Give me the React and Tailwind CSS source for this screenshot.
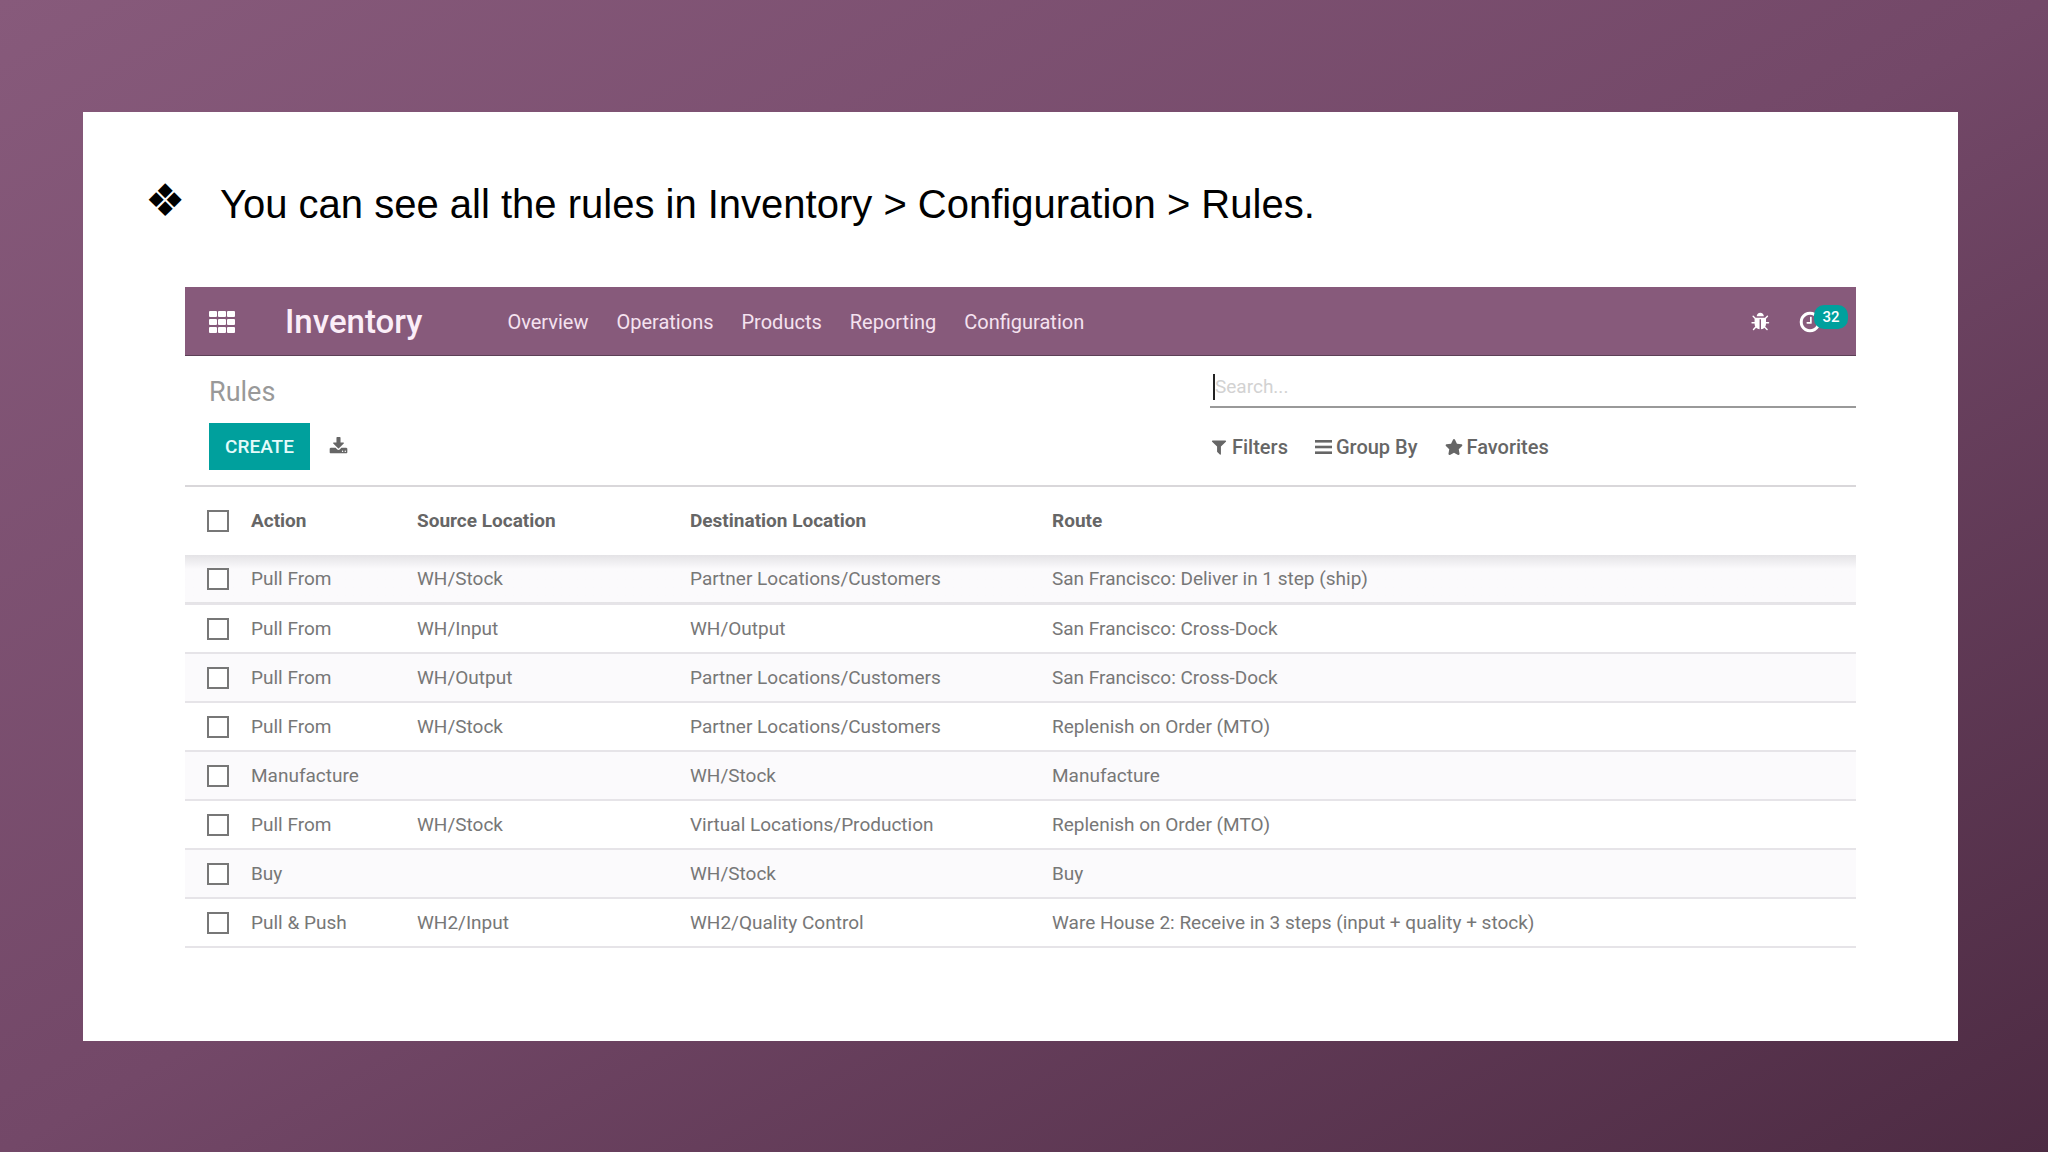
import React, { useState } from 'react';
import { FaStar } from 'react-icons/fa';

const menus = ['Overview', 'Operations', 'Products', 'Reporting', 'Configuration'];

const rules = [
  { id: 1, action: 'Pull From', source: 'WH/Stock', destination: 'Partner Locations/Customers', route: 'San Francisco: Deliver in 1 step (ship)' },
  { id: 2, action: 'Pull From', source: 'WH/Input', destination: 'WH/Output', route: 'San Francisco: Cross-Dock' },
  { id: 3, action: 'Pull From', source: 'WH/Output', destination: 'Partner Locations/Customers', route: 'San Francisco: Cross-Dock' },
  { id: 4, action: 'Pull From', source: 'WH/Stock', destination: 'Partner Locations/Customers', route: 'Replenish on Order (MTO)' },
  { id: 5, action: 'Manufacture', source: '', destination: 'WH/Stock', route: 'Manufacture' },
  { id: 6, action: 'Pull From', source: 'WH/Stock', destination: 'Virtual Locations/Production', route: 'Replenish on Order (MTO)' },
  { id: 7, action: 'Buy', source: '', destination: 'WH/Stock', route: 'Buy' },
  { id: 8, action: 'Pull & Push', source: 'WH2/Input', destination: 'WH2/Quality Control', route: 'Ware House 2: Receive in 3 steps (input + quality + stock)' },
];

function Icon({ d, className }) {
  return (
    <svg viewBox="0 0 1792 1792" fill="currentColor" aria-hidden="true" className={className}>
      <path d={d} />
    </svg>
  );
}

const bugPath =
  'M1632 960q0 26-19 45t-45 19h-224q0 171-67 290l208 209q19 19 19 45t-19 45q-18 19-45 19t-45-19l-198-197q-5 5-15 13t-42 28.5-65 36.5-82 29-97 13v-896h-128v896q-51 0-101.5-13.5t-87-33-66-39-43.5-32.5l-15-14-183 207q-20 21-48 21-24 0-43-16-19-18-20.5-44.5t15.5-46.5l202-227q-58-114-58-274h-224q-26 0-45-19t-19-45 19-45 45-19h224v-294l-173-173q-19-19-19-45t19-45 45-19 45 19l173 173h844l173-173q19-19 45-19t45 19 19 45-19 45l-173 173v294h224q26 0 45 19t19 45zm-480-576h-640q0-133 93.5-226.5t226.5-93.5 226.5 93.5 93.5 226.5z';
const clockPath =
  'M1024 544v448q0 14-9 23t-23 9h-320q-14 0-23-9t-9-23v-64q0-14 9-23t23-9h224v-352q0-14 9-23t23-9h64q14 0 23 9t9 23zm416 352q0-148-73-273t-198-198-273-73-273 73-198 198-73 273 73 273 198 198 273 73 273-73 198-198 73-273zm224 0q0 209-103 385.5t-279.5 279.5-385.5 103-385.5-103-279.5-279.5-103-385.5 103-385.5 279.5-279.5 385.5-103 385.5 103 279.5 279.5 103 385.5z';
const downloadPath =
  'M1344 1344q0-26-19-45t-45-19-45 19-19 45 19 45 45 19 45-19 19-45zm256 0q0-26-19-45t-45-19-45 19-19 45 19 45 45 19 45-19 19-45zm128-224v320q0 40-28 68t-68 28h-1472q-40 0-68-28t-28-68v-320q0-40 28-68t68-28h465l135 136q58 56 136 56t136-56l136-136h464q40 0 68 28t28 68zm-325-569q17 41-14 70l-448 448q-18 19-45 19t-45-19l-448-448q-31-29-14-70 17-39 59-39h256v-448q0-26 19-45t45-19h256q26 0 45 19t19 45v448h256q42 0 59 39z';
const filterPath =
  'M1595 295q17 41-14 70l-493 493v742q0 42-39 59-13 5-25 5-27 0-45-19l-256-256q-19-19-19-45v-486l-493-493q-31-29-14-70 17-39 59-39h1280q42 0 59 39z';

function AppsIcon() {
  return (
    <svg viewBox="0 0 26 22" fill="currentColor" aria-hidden="true" className="h-[22px] w-[26px]">
      {[0, 9, 18].map((x) =>
        [0, 8, 16].map((y) => <rect key={`${x}-${y}`} x={x} y={y} width="8" height="6" rx="1" />)
      )}
    </svg>
  );
}

function BarsIcon() {
  return (
    <svg viewBox="0 0 17 14" fill="currentColor" aria-hidden="true" className="h-[14px] w-[17px]">
      <rect y="0" width="17" height="2.6" />
      <rect y="5.7" width="17" height="2.6" />
      <rect y="11.4" width="17" height="2.6" />
    </svg>
  );
}

function Checkbox({ label, checked, onChange }) {
  return (
    <input
      type="checkbox"
      aria-label={label}
      checked={checked}
      onChange={onChange}
      className="block size-[22px] appearance-none border-2 border-[#777777] bg-white checked:bg-[#00a09d]"
    />
  );
}

function Navbar() {
  return (
    <header className="flex h-[69px] items-center border-b border-[#5c4056] bg-[#875a7b] pt-[2px] pr-2 pl-6 text-white">
      <button type="button" aria-label="Apps">
        <AppsIcon />
      </button>
      <a href="#inventory" className="ml-[50px] text-[33px] leading-9 font-medium text-[#fbeef8]">
        Inventory
      </a>
      <nav className="ml-[85px] flex gap-7 text-[20px] leading-6 text-[#f5e2f0]">
        {menus.map((menu) => (
          <a key={menu} href={`#${menu.toLowerCase()}`}>
            {menu}
          </a>
        ))}
      </nav>
      <div className="ml-auto flex items-center gap-[27px]">
        <button type="button" aria-label="Debug">
          <Icon d={bugPath} className="size-5" />
        </button>
        <button type="button" aria-label="Activities" className="relative w-[50px]">
          <Icon d={clockPath} className="size-6" />
          <span className="absolute -top-[5px] right-0 flex h-6 w-[34px] items-center justify-center rounded-[10px] bg-[#00a09d] text-[15px] leading-5 font-medium">
            32
          </span>
        </button>
      </div>
    </header>
  );
}

function ControlPanel() {
  return (
    <div className="flex justify-between border-b-2 border-[#d9d7da] pl-6">
      <div className="pt-5 pb-[15px]">
        <h1 className="text-[27px] leading-8 text-[#999999]">Rules</h1>
        <div className="mt-[15px] flex items-center gap-[19px]">
          <button type="button" className="h-[47px] w-[101px] bg-[#00a09d] text-[19px] leading-6 font-medium text-[#e4fbfa]">
            CREATE
          </button>
          <button type="button" aria-label="Export" className="text-[#666666]">
            <Icon d={downloadPath} className="size-[19px]" />
          </button>
        </div>
      </div>

      <div className="w-[646px] pt-3 leading-6">
        <div className="flex h-10 items-center border-b-2 border-[#999999] pl-[3px]">
          <span className="h-[26px] w-[2px] bg-[#222222]" />
          <input
            type="text"
            aria-label="Search"
            placeholder="Search..."
            className="min-w-0 flex-1 text-[19px] outline-none placeholder:text-[#d2d2d2]"
          />
        </div>
        <div className="mt-[27px] flex gap-[27px] text-[20px] font-medium text-[#666666]">
          <button type="button" className="flex items-center gap-1 leading-6">
            <Icon d={filterPath} className="size-[18px]" />
            Filters
          </button>
          <button type="button" className="flex items-center gap-1 leading-6">
            <BarsIcon />
            Group By
          </button>
          <button type="button" className="flex items-center gap-1 leading-6">
            <FaStar size={18} aria-hidden="true" />
            Favorites
          </button>
        </div>
      </div>
    </div>
  );
}

function RulesTable() {
  const [selected, setSelected] = useState([]);

  const toggle = (id) => {
    setSelected((prev) => (prev.includes(id) ? prev.filter((item) => item !== id) : [...prev, id]));
  };

  const toggleAll = () => {
    setSelected(selected.length === rules.length ? [] : rules.map((rule) => rule.id));
  };

  return (
    <table className="w-full table-fixed border-collapse text-left text-[19px] leading-6 text-[#777777]">
      <thead>
        <tr className="h-[68px] text-[#666666]">
          <th className="w-[66px] pl-[22px]">
            <Checkbox label="Select all rules" checked={selected.length === rules.length} onChange={toggleAll} />
          </th>
          <th className="w-[166px] font-bold">Action</th>
          <th className="w-[273px] font-bold">Source Location</th>
          <th className="w-[362px] font-bold">Destination Location</th>
          <th className="font-bold">Route</th>
        </tr>
      </thead>
      <tbody>
        {rules.map((rule) => (
          <tr
            key={rule.id}
            className="h-[49px] border-b-2 border-[#e6e4e8] odd:bg-[#fbfafc] first:bg-linear-to-b first:from-[#e4e3e6] first:to-[#fbfafc] first:to-30%"
          >
            <td className="pl-[22px]">
              <Checkbox label={`Select rule ${rule.id}`} checked={selected.includes(rule.id)} onChange={() => toggle(rule.id)} />
            </td>
            <td>{rule.action}</td>
            <td>{rule.source}</td>
            <td>{rule.destination}</td>
            <td>{rule.route}</td>
          </tr>
        ))}
      </tbody>
    </table>
  );
}

export default function App() {
  return (
    <div className="flex min-h-screen bg-linear-to-br from-[#875a7b] via-[#734868] to-[#4d2b43] pt-28 pr-[90px] pb-[111px] pl-[83px]">
      <main className="flex-1 bg-white pt-[68px] pr-[102px] pl-[62px]">
        <div className="flex items-start font-['Liberation_Sans',Arial,sans-serif] text-[40px] leading-[48px] text-black">
          <span className="w-[75px] font-['DejaVu_Sans',sans-serif] text-[45px] leading-[42px]">❖</span>
          <p>You can see all the rules in Inventory &gt; Configuration &gt; Rules.</p>
        </div>
        <section className="mt-[59px] ml-10 font-['Roboto',sans-serif]">
          <Navbar />
          <ControlPanel />
          <RulesTable />
        </section>
      </main>
    </div>
  );
}
